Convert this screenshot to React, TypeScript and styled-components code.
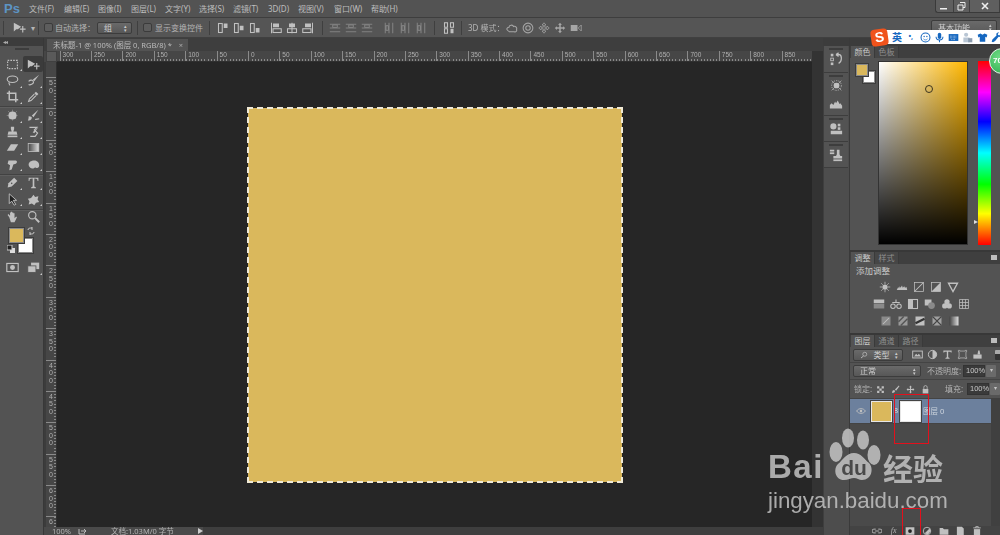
import React from "react";
import styled, { createGlobalStyle } from "styled-components";

const Global = createGlobalStyle`
  html, body { margin: 0; padding: 0; background: #535353; overflow: hidden; }
  * { box-sizing: border-box; }
`;

const CJK = `"Noto Sans", "Noto Sans CJK SC", sans-serif`;

const Page = styled.div`
  position: relative;
  width: 1000px;
  height: 535px;
  overflow: hidden;
  background: #535353;
  color: #c4c4c4;
  font: 8px/10px ${CJK};
  display: flex;
  flex-direction: column;
`;
const Chrome = styled.div`
  flex: 1;
  display: flex;
  flex-direction: column;
  min-height: 0;
  filter: blur(0.35px);
`;

/* Menu bar */
const MenuBar = styled.div`
  height: 18px;
  flex: none;
  display: flex;
  align-items: flex-start;
  border-bottom: 1px solid #3e3e3e;
  background: #535353;
`;
const Logo = styled.div`
  width: 29px;
  padding: 1px 0 0 4px;
  font: bold 13px/15px "Liberation Sans", sans-serif;
  color: #5d94c4;
`;
const Menu = styled.nav`
  display: flex;
  gap: 10px;
  padding-top: 4px;
  flex: 1;
`;
const MenuItem = styled.span<{ $w: number }>`
  width: ${(p) => p.$w}px;
  white-space: nowrap;
  color: #bdbdbd;
`;
const WinButtons = styled.div`
  display: flex;
  height: 13px;
  width: 65px;
  border: 1px solid #3a3a3a;
  border-top: 0;
  border-right: 0;
  border-radius: 0 0 0 3px;
  background: #5f5f5f;
`;
const WinButton = styled.div<{ $w: number }>`
  width: ${(p) => p.$w}px;
  display: flex;
  align-items: center;
  justify-content: center;
  border-right: 1px solid #3f3f3f;
  color: #eee;
`;

/* Options bar */
const OptionsBar = styled.div`
  height: 20px;
  flex: none;
  display: flex;
  align-items: center;
  padding-left: 3px;
  background: #555;
  border-bottom: 1px solid #404040;
`;
const Divider = styled.div<{ $l?: number; $r?: number }>`
  width: 1px;
  height: 14px;
  background: #3f3f3f;
  flex: none;
  margin: 0 ${(p) => p.$r ?? 6}px 0 ${(p) => p.$l ?? 6}px;
`;
const Check = styled.div`
  width: 9px;
  height: 9px;
  background: #5d5d5d;
  border: 1px solid #3b3b3b;
  border-radius: 2px;
  flex: none;
`;
const OptLabel = styled.span<{ $ml?: number; $w?: number }>`
  margin-left: ${(p) => p.$ml ?? 3}px;
  ${(p) => (p.$w ? `width:${p.$w}px;` : "")}
  white-space: nowrap;
  color: #b4b4b4;
  flex: none;
`;
const SelectBox = styled.div<{ $w: number; $h?: number }>`
  width: ${(p) => p.$w}px;
  height: ${(p) => p.$h ?? 12}px;
  flex: none;
  display: flex;
  align-items: center;
  justify-content: space-between;
  padding: 0 4px 0 6px;
  background: linear-gradient(#6a6a6a, #575757);
  border: 1px solid #3c3c3c;
  border-radius: 2px;
  color: #d0d0d0;
  white-space: nowrap;
`;
const WorkspaceSelect = styled(SelectBox)`
  margin-left: auto;
  margin-right: 3px;
  align-items: flex-start;
  padding-top: 2px;
`;
const Spin = styled.span`
  font-size: 5px;
  line-height: 4px;
  display: flex;
  flex-direction: column;
  color: #ccc;
`;
const OptIcons = styled.div<{ $gap: number; $op?: number; $ml?: number }>`
  display: flex;
  gap: ${(p) => p.$gap}px;
  flex: none;
  margin-left: ${(p) => p.$ml ?? 0}px;
  opacity: ${(p) => p.$op ?? 1};
`;

/* Workspace */
const Workspace = styled.div`
  flex: 1;
  min-height: 0;
  display: flex;
`;
const ToolPanel = styled.aside`
  width: 44px;
  flex: none;
  display: flex;
  flex-direction: column;
  background: #535353;
  border-right: 1px solid #383838;
`;
const CollapseBar = styled.div`
  height: 8px;
  flex: none;
  background: #3c3c3c;
  color: #aaa;
  font: 6px/8px "Liberation Sans", sans-serif;
  padding-left: 3px;
  letter-spacing: -1px;
`;
const CollapseBarRight = styled(CollapseBar)`
  text-align: center;
  padding: 0;
`;
const Grip = styled.div<{ $h?: number }>`
  height: ${(p) => p.$h ?? 10}px;
  flex: none;
  position: relative;
  &::after {
    content: "";
    position: absolute;
    left: 50%;
    top: 2px;
    width: 14px;
    height: 2px;
    margin-left: -7px;
    background: #3d3d3d;
  }
`;
const ToolGroup = styled.div<{ $rows: number }>`
  display: grid;
  grid-template-columns: 21px 20px;
  grid-auto-rows: 16.25px;
  height: ${(p) => p.$rows * 16.25 + 2.5}px;
  padding: 0 0 0 2px;
  flex: none;
  border-bottom: 1px solid #424242;
  box-shadow: 0 1px 0 #5f5f5f;
`;
const ToolCell = styled.div<{ $on?: boolean; $more?: boolean }>`
  position: relative;
  display: flex;
  align-items: center;
  justify-content: center;
  border-radius: 2px;
  background: ${(p) => (p.$on ? "#3b3b3b" : "transparent")};
  &::after {
    content: "";
    display: ${(p) => (p.$more ? "block" : "none")};
    position: absolute;
    right: 1px;
    bottom: 1px;
    border-left: 2px solid transparent;
    border-bottom: 2px solid #ccc;
  }
`;
const HandRow = styled.div<{ $h: number }>`
  display: grid;
  grid-template-columns: 21px 20px;
  grid-auto-rows: ${(p) => p.$h}px;
  padding-left: 2px;
  flex: none;
`;
const SwatchArea = styled.div`
  position: relative;
  height: 34px;
  flex: none;
  margin-top: 2px;
`;
const Swatch = styled.div<{ $c: string; $x: number; $y: number; $s: number; $z: number }>`
  position: absolute;
  left: ${(p) => p.$x}px;
  top: ${(p) => p.$y}px;
  width: ${(p) => p.$s}px;
  height: ${(p) => p.$s}px;
  background: ${(p) => p.$c};
  z-index: ${(p) => p.$z};
  border: 1px solid #8a8a8a;
  outline: 1px solid #3c3c3c;
`;
const MiniMark = styled.span<{ $x: number; $y: number }>`
  position: absolute;
  left: ${(p) => p.$x}px;
  top: ${(p) => p.$y}px;
  line-height: 0;
`;

/* Document */
const DocArea = styled.main`
  flex: 1;
  min-width: 0;
  display: flex;
  flex-direction: column;
  background: #3c3c3c;
`;
const TabStrip = styled.div`
  height: 13px;
  flex: none;
  padding-left: 3px;
  display: flex;
  align-items: flex-end;
  background: #3e3e3e;
`;
const DocTab = styled.div`
  width: 141px;
  height: 12px;
  background: #535353;
  color: #bbb;
  padding-left: 6px;
  display: flex;
  justify-content: space-between;
  font-size: 7.5px;
  line-height: 12px;
  white-space: nowrap;
`;
const TabClose = styled.span`
  padding-right: 5px;
  color: #aaa;
`;
const RulerTop = styled.div`
  height: 11px;
  flex: none;
  display: flex;
  background: #464646;
`;
const RulerCorner = styled.div`
  width: 11px;
  flex: none;
  background: #5a5a5a;
  border: 1px solid #404040;
  margin-left: 2px;
`;
const RulerTrack = styled.div`
  flex: 1;
  display: flex;
  padding-left: 2.6px;
  overflow: hidden;
  border-bottom: 1px solid #2f2f2f;
  background: repeating-linear-gradient(90deg, #8a8a8a 0 1px, transparent 1px 3.14px) 2.6px 100% / 100% 2px no-repeat;
`;
const RulerCell = styled.span`
  width: 31.4px;
  flex: none;
  height: 10px;
  border-left: 1px solid #8a8a8a;
  padding-left: 2px;
  font: 6.5px/8px "Liberation Sans", sans-serif;
  color: #b0b0b0;
`;
const DocBody = styled.div`
  flex: 1;
  min-height: 0;
  display: flex;
`;
const RulerLeft = styled.div`
  width: 11px;
  margin-left: 2px;
  flex: none;
  padding-top: 15px;
  overflow: hidden;
  display: flex;
  flex-direction: column;
  border-right: 1px solid #2f2f2f;
  background: repeating-linear-gradient(180deg, #8a8a8a 0 1px, transparent 1px 3.14px) 100% 15px / 2px 100% no-repeat, #464646;
`;
const VCell = styled.span`
  height: 31.4px;
  flex: none;
  border-top: 1px solid #8a8a8a;
  padding: 1px 0 0 3px;
  font: 7px/7.500px "Liberation Sans", sans-serif;
  color: #b0b0b0;
  white-space: pre-line;
`;
const Canvas = styled.div`
  flex: 1;
  min-width: 0;
  background: #262626;
  display: flex;
  justify-content: flex-start;
  padding: 46px 0 0 191px;
`;
const Artboard = styled.div`
  width: 374px;
  height: 374px;
  background: #dab85c;
  outline: 2px dashed #f0ead6;
  outline-offset: -1px;
  flex: none;
`;
const VScroll = styled.div`
  width: 11px;
  flex: none;
  background: #333;
`;
const StatusBar = styled.div`
  height: 8px;
  flex: none;
  display: flex;
  align-items: center;
  background: #3e3e3e;
  font-size: 7.5px;
  line-height: 8px;
  overflow: hidden;
`;
const StatusInfo = styled.div`
  width: 159px;
  height: 8px;
  display: flex;
  align-items: center;
  background: #4a4a4a;
  padding-left: 8px;
  color: #bbb;
  white-space: nowrap;
`;

/* Right strip */
const Strip = styled.aside`
  width: 27px;
  flex: none;
  display: flex;
  flex-direction: column;
  background: #535353;
  border-right: 1px solid #3a3a3a;
`;
const StripBody = styled.div`
  flex: 1;
  padding-left: 4px;
  border-left: 1px solid #3e3e3e;
  display: flex;
  flex-direction: column;
  background: #4d4d4d;
`;
const StripGroup = styled.div<{ $h: number }>`
  height: ${(p) => p.$h}px;
  flex: none;
  width: 24px;
  margin-left: -4px;
  padding-bottom: 3px;
  border-bottom: 1px solid #3d3d3d;
  display: flex;
  flex-direction: column;
  align-items: center;
  background: #535353;
`;
const StripSpace = styled.div`
  height: 5px;
  flex: none;
`;

/* Panels */
const Panels = styled.aside`
  width: 150px;
  flex: none;
  display: flex;
  flex-direction: column;
  background: #383838;
`;
const Panel = styled.section<{ $h: number }>`
  height: ${(p) => p.$h}px;
  flex: none;
  background: #535353;
  display: flex;
  flex-direction: column;
  border-bottom: 2px solid #383838;
`;
const PanelGrow = styled(Panel)`
  flex: 1;
  height: auto;
  border: 0;
`;
const Tabs = styled.div`
  height: 12px;
  flex: none;
  display: flex;
  padding-left: 1px;
  background: #3f3f3f;
  position: relative;
`;
const Tab = styled.div<{ $on?: boolean }>`
  width: 24px;
  text-align: center;
  line-height: 12px;
  background: ${(p) => (p.$on ? "#535353" : "#464646")};
  color: ${(p) => (p.$on ? "#c8c8c8" : "#8e8e8e")};
  border-right: 1px solid #3a3a3a;
`;
const PanelMenu = styled.span`
  position: absolute;
  right: 3px;
  top: 3px;
  width: 6px;
  height: 5px;
  background: #bdbdbd;
`;
const ColorBody = styled.div`
  flex: 1;
  display: flex;
  padding: 3px 0 0 0;
  position: relative;
`;
const FgBg = styled.div`
  width: 28px;
  flex: none;
  position: relative;
`;
const Field = styled.div`
  width: 90px;
  height: 184px;
  flex: none;
  position: relative;
  border: 1px solid #333;
  background: linear-gradient(to top, #000, rgba(0, 0, 0, 0)), linear-gradient(to right, #fff, #ffb700);
`;
const Picker = styled.span`
  position: absolute;
  left: 46px;
  top: 23px;
  width: 8px;
  height: 8px;
  border: 1px solid #3c3520;
  border-radius: 50%;
`;
const Hue = styled.div`
  width: 13px;
  height: 184px;
  flex: none;
  margin-left: 10px;
  position: relative;
  background: linear-gradient(#ff0000 0%, #ff00ff 17%, #0000ff 33%, #00ffff 50%, #00ff00 67%, #ffff00 83%, #ff0000 100%);
  &::before {
    content: "";
    position: absolute;
    left: -4px;
    top: 159px;
    border-left: 4px solid #ddd;
    border-top: 2.5px solid transparent;
    border-bottom: 2.5px solid transparent;
  }
`;
const AdjustTitle = styled.div`
  padding: 2px 0 0 6px;
  height: 14px;
  font-size: 8.5px;
  color: #c8c8c8;
`;
const IconRow = styled.div<{ $pl: number }>`
  display: flex;
  gap: 5px;
  height: 17px;
  align-items: center;
  padding-left: ${(p) => p.$pl}px;
`;
const LayerRow = styled.div<{ $h: number }>`
  height: ${(p) => p.$h}px;
  padding-left: 3px;
  display: flex;
  align-items: center;
  flex: none;
`;
const FilterToggle = styled.div`
  width: 6px;
  height: 10px;
  margin-left: 12px;
  background: linear-gradient(#aaa 0 40%, #333 40%);
  border-radius: 1px;
  flex: none;
`;
const Thin = styled.div`
  height: 1px;
  background: #444;
  flex: none;
`;
const LayerList = styled.div`
  flex: 1;
  display: flex;
  min-height: 0;
`;
const LayerCol = styled.div`
  flex: 1;
  background: #4a4a4a;
`;
const LayerItem = styled.div`
  height: 26px;
  display: flex;
  align-items: center;
  background: #6c809d;
  border: 1px solid #444;
  border-width: 1px 0;
  color: #d0d0d0;
`;
const LayerEye = styled.div`
  width: 21px;
  display: flex;
  justify-content: center;
`;
const Thumb = styled.div<{ $c: string }>`
  width: 21px;
  height: 21px;
  padding: 1px;
  background: ${(p) => p.$c};
  border: 1px solid #e6e6e6;
  outline: 1px solid #444;
  flex: none;
`;
const Chain = styled.div`
  width: 8px;
  text-align: center;
  color: #ddd;
  font-size: 7px;
`;
const LayerName = styled.span`
  margin-left: 2px;
  color: #cfd6df;
  font-size: 7.5px;
`;
const LScroll = styled.div`
  width: 9px;
  flex: none;
  background: #404040;
`;
const LayerFoot = styled.div`
  height: 9px;
  flex: none;
  display: flex;
  align-items: center;
  padding-left: 22px;
  gap: 6.7px;
  background: #434343;
  overflow: hidden;
`;
const FxLabel = styled.span`
  width: 10px;
  flex: none;
  text-align: center;
  font: italic 8px/9px "Liberation Serif", serif;
  color: #b4b4b4;
`;
const PctBox = styled.div`
  width: 22px;
  height: 12px;
  background: #3a3a3a;
  border: 1px solid #333;
  font: 7.5px/10px "Liberation Sans", sans-serif;
  padding-left: 2px;
  color: #c8c8c8;
  flex: none;
`;
const PctArrow = styled.div`
  width: 10px;
  height: 12px;
  margin-left: 1px;
  background: #6a6a6a;
  border-radius: 1px;
  flex: none;
  text-align: center;
  font-size: 6px;
  line-height: 11px;
`;

/* Overlays */
const Sogou = styled.div`
  position: absolute;
  left: 877px;
  top: 30px;
  width: 123px;
  height: 14px;
  background: #fff;
  display: flex;
  align-items: center;
  padding-left: 15px;
  gap: 3.3px;
  z-index: 5;
`;
const SogouLetter = styled.div`
  position: absolute;
  left: 871px;
  top: 29px;
  width: 17px;
  height: 17px;
  border-radius: 4px;
  transform: rotate(-8deg);
  background: #f0531c;
  color: #fff;
  font: bold 14px/17px "Liberation Sans", sans-serif;
  text-align: center;
  z-index: 6;
`;
const SogouLang = styled.span`
  color: #1567c0;
  font-size: 10px;
  font-weight: bold;
  line-height: 12px;
  width: 10px;
  flex: none;
`;
const SogouPunct = styled(SogouLang)`
  width: 11px;
  font-size: 7px;
  text-align: center;
`;
const Badge = styled.div`
  position: absolute;
  left: 989px;
  top: 48px;
  width: 26px;
  height: 26px;
  border-radius: 50%;
  background: radial-gradient(circle at 40% 35%, #6fdc86, #2aa948);
  border: 1px solid #e9f5ea;
  color: #fff;
  font: bold 8px/24px "Liberation Sans", sans-serif;
  padding-left: 3px;
  z-index: 5;
`;
const RedBox = styled.div<{ $x: number; $y: number; $w: number; $h: number }>`
  position: absolute;
  left: ${(p) => p.$x}px;
  top: ${(p) => p.$y}px;
  width: ${(p) => p.$w}px;
  height: ${(p) => p.$h}px;
  border: 1.5px solid #e3101c;
  z-index: 7;
`;
const Watermark = styled.div`
  position: absolute;
  left: 768px;
  top: 428px;
  width: 180px;
  height: 86px;
  color: #c9c9c9;
  opacity: 0.82;
  z-index: 4;
  filter: blur(0.3px);
`;
const WmBai = styled.span`
  position: absolute;
  left: 0;
  top: 19px;
  font: bold 33px/40px "Liberation Sans", sans-serif;
  letter-spacing: 1.5px;
`;
const WmJing = styled.span`
  position: absolute;
  left: 115px;
  top: 19px;
  font: bold 30px/40px "Noto Sans CJK SC", sans-serif;
  white-space: nowrap;
`;
const WmUrl = styled.span`
  position: absolute;
  left: 0;
  top: 60px;
  font: 22.3px/26px "Liberation Sans", sans-serif;
  white-space: nowrap;
`;
const PawSvg = styled.svg`
  position: absolute;
  left: 58px;
  top: 0;
`;

/* Icon drawing */
const Svg = styled.svg`
  display: block;
  flex: none;
`;
type IP = { n: keyof typeof G; s?: number };
const Ic = ({ n, s = 12 }: IP) => (
  <Svg width={s} height={s} viewBox="0 0 16 16" fill="#c0c0c0" stroke="none">
    {G[n]}
  </Svg>
);
const st = { fill: "none", stroke: "#c0c0c0", strokeWidth: 1.4 } as const;
const G = {
  marquee: <rect x="2" y="3" width="12" height="10" {...st} strokeDasharray="2 1.4" />,
  move: <><path d="M1 2v11l3-3 2 0 4-3z" /><path d="M12 6v8M8.5 10h7" {...st} /></>,
  lasso: <><ellipse cx="8" cy="6.5" rx="6.5" ry="4" {...st} /><path d="M4 10c-1 2 0 3 1 4" {...st} /></>,
  qsel: <><path d="M15 1 7 7l2 2z" /><path d="M2 9c3-3 6-1 6 1s-4 4-6 3" {...st} /></>,
  crop: <path d="M4 1v11h11M1 4h11v11" {...st} strokeWidth={1.8} />,
  dropper: <><path d="M11 2l3 3-2 2-3-3z" /><path d="M9 5 3 11l-1 3 3-1 6-6" {...st} /></>,
  heal: <><circle cx="8" cy="8" r="5" /><path d="M1 8h14M8 1v14M3 3l10 10M13 3 3 13" {...st} strokeWidth={0.8} strokeDasharray="1 1" /></>,
  brush: <><path d="M14 1 6 8l2 2z" /><path d="M2 9c3 0 4 1 4 2-1 3-3 3-5 3 1-1 1-3 1-5z" /><path d="M10 13c2-1 3 0 5-1" {...st} /></>,
  stamp: <><path d="M6 2h4v3l-1 3h4l1 4H2l1-4h4L6 5z" /><rect x="2" y="13" width="12" height="2" /></>,
  hist: <><path d="M3 3h9l-3 3 4 4-3 4H4" {...st} /><path d="M14 2 7 9l2 1z" /></>,
  eraser: <path d="M6 4h9l-5 8H1z" />,
  grad: <><defs><linearGradient id="gr"><stop offset="0" stopColor="#444" /><stop offset="1" stopColor="#ddd" /></linearGradient></defs><rect x="1.5" y="3" width="13" height="10" fill="url(#gr)" stroke="#c0c0c0" /></>,
  dodge: <path d="M3 3h9c2 0 2 3 0 4l-3 1-2 6-3 1 1-6-3-2z" />,
  sponge: <path d="M2 8c0-3 3-5 7-5s6 3 6 6-2 4-4 3-2 1-4 1-5-2-5-5z" />,
  pen: <><path d="M10 2l4 4-7 7-5 1 1-5z" /><circle cx="7" cy="9" r="1" fill="#535353" /></>,
  T: <path d="M2 2h12v4h-1c0-2-1-3-3-3H9v10l2 1v1H5v-1l2-1V3H6C4 3 3 4 3 6H2z" />,
  psel: <path d="M4 1v12l3-3 3 5 2-1-3-5h4z" fill="#222" stroke="#d0d0d0" />,
  shape: <path d="M8 2l2 3 4-1-1 4 2 3-4 1-2 3-3-2-4 1 1-4-2-3 4-1z" />,
  hand: <path d="M4 9 2 6l1-1 2 2V3h1v4-5h1.500v5-4H9v4-3h1.500v6l2-2 1 1-3 6H6z" />,
  zoom: <><circle cx="6.500" cy="6.500" r="4.500" {...st} /><path d="M10 10l5 5" {...st} strokeWidth={2.400} /></>,
  mask: <><rect x="1" y="3" width="14" height="10" {...st} /><circle cx="8" cy="8" r="3" /></>,
  screen: <><rect x="5" y="2" width="10" height="8" /><rect x="1" y="6" width="10" height="8" stroke="#535353" /></>,
  alignT: <><rect x="2" y="2" width="5" height="12" {...st} /><rect x="9" y="2" width="5" height="6" /></>,
  alignM: <><rect x="2" y="2" width="5" height="12" {...st} /><rect x="9" y="5" width="5" height="6" /></>,
  alignB: <><rect x="2" y="2" width="5" height="12" {...st} /><rect x="9" y="8" width="5" height="6" /></>,
  alignL: <><path d="M2 1v14" {...st} /><rect x="4" y="2" width="8" height="5" /><rect x="4" y="9" width="11" height="5" {...st} /></>,
  alignC: <><path d="M8 1v14" {...st} /><rect x="4" y="2" width="8" height="5" /><rect x="2" y="9" width="12" height="5" {...st} /></>,
  alignR: <><path d="M14 1v14" {...st} /><rect x="4" y="2" width="8" height="5" /><rect x="1" y="9" width="11" height="5" {...st} /></>,
  distH: <><path d="M1 3h14M1 8h14M1 13h14" {...st} strokeWidth={1} /><rect x="5" y="4" width="6" height="3" {...st} strokeWidth={1} /></>,
  distV: <><path d="M3 1v14M8 1v14M13 1v14" {...st} strokeWidth={1} /><rect x="4" y="5" width="3" height="6" {...st} strokeWidth={1} /></>,
  distA: <><rect x="2" y="1" width="4" height="6" {...st} /><rect x="10" y="1" width="4" height="6" {...st} /><rect x="2" y="9" width="4" height="6" {...st} /><rect x="10" y="9" width="4" height="6" /></>,
  cloud: <path d="M2 11c-2-2 0-4 2-4 0-3 5-4 6-1 3-1 5 2 4 4 1 2-1 4-3 3H5c-1 0-2-1-3-2z" {...st} />,
  target: <><circle cx="8" cy="8" r="6.500" {...st} /><circle cx="8" cy="8" r="3" {...st} /></>,
  cross4: <path d="M8 1 5.500 4H7v3H4V5.500L1 8l3 2.500V9h3v3H5.500L8 15l2.500-3H9V9h3v1.500L15 8l-3-2.500V7H9V4h1.500z" {...st} strokeWidth={1} />,
  cross5: <path d="M8 1 5.500 4H7v3H4V5.500L1 8l3 2.500V9h3v3H5.500L8 15l2.500-3H9V9h3v1.500L15 8l-3-2.500V7H9V4h1.500z" />,
  cam: <><rect x="1" y="4" width="9" height="8" /><path d="M11 8l4-4v8z" {...st} strokeWidth={1} /></>,
  hist2: <><rect x="2" y="2" width="3" height="3" /><rect x="2" y="7" width="3" height="3" {...st} strokeWidth={1} /><rect x="2" y="12" width="3" height="3" /><path d="M8 3h4c3 1 3 8-1 10M8 3l3-2M8 3l3 2" {...st} /></>,
  gear: <><circle cx="8" cy="8" r="3.500" /><circle cx="8" cy="8" r="6" {...st} strokeWidth={1} strokeDasharray="1.500 1.500" /><path d="M2 2l12 12M14 2 2 14" {...st} strokeWidth={0.8} /></>,
  hills: <path d="M1 13v-4l2-2 2 2 2-4 1 2 2-3 2 4 1-1 2 3v3z" />,
  props: <><circle cx="5" cy="5" r="3.500" /><rect x="10" y="2" width="3" height="3" /><rect x="10" y="6" width="3" height="3" /><rect x="2" y="10" width="13" height="4" /></>,
  stampI: <><rect x="1" y="2" width="5" height="2" /><rect x="1" y="5" width="5" height="2" /><path d="M9 2h3v5l1 2h2v3H5V9h3l1-2z" /><rect x="5" y="13" width="10" height="2" /></>,
  sun: <><circle cx="8" cy="8" r="3.500" /><path d="M8 1v3M8 12v3M1 8h3M12 8h3M3 3l2 2M11 11l2 2M13 3l-2 2M3 13l2-2" {...st} strokeWidth={1} /></>,
  levels: <path d="M1 12 3 8l1 2 1-3 1 2 2-3 1 3 2-2 1 2 2-1 1 4z" />,
  curves: <><rect x="2" y="2" width="12" height="12" {...st} strokeWidth={1} /><path d="M2 14 14 2" {...st} /></>,
  expo: <><rect x="2" y="2" width="12" height="12" {...st} strokeWidth={1} /><path d="M2 14 14 2v12z" /></>,
  tri: <path d="M2 3h12l-6 11z" {...st} strokeWidth={1.800} />,
  hsl: <><rect x="1" y="2" width="14" height="5" /><rect x="1" y="8" width="14" height="6" fill="#8a8a8a" /></>,
  bal: <><path d="M8 2v4M3 6h10" {...st} /><circle cx="4" cy="11" r="3" {...st} /><circle cx="12" cy="11" r="3" {...st} /></>,
  bw: <><rect x="2" y="2" width="12" height="12" {...st} /><rect x="2" y="2" width="6" height="12" /></>,
  pf: <><rect x="1" y="2" width="9" height="8" /><circle cx="10" cy="10" r="4.500" fill="#8a8a8a" /></>,
  mixer: <><circle cx="8" cy="5" r="3.500" /><circle cx="5" cy="10.500" r="3.500" /><circle cx="11" cy="10.500" r="3.500" /></>,
  lut: <path d="M2 2h12v12H2zM2 6h12M2 10h12M6 2v12M10 2v12" {...st} strokeWidth={1} />,
  inv: <><rect x="2" y="2" width="12" height="12" fill="#8a8a8a" /><path d="M4 12 12 4" {...st} /></>,
  post: <><rect x="2" y="2" width="12" height="12" fill="#9a9a9a" /><path d="M2 9 9 2M5 14 14 5" stroke="#555" strokeWidth={2} /></>,
  thre: <><rect x="2" y="2" width="12" height="12" /><path d="M2 11 14 5" stroke="#333" strokeWidth={3} /></>,
  sel: <><rect x="2" y="2" width="12" height="12" fill="#a0a0a0" /><path d="M2 2l6 6 6-6M2 14l6-6 6 6" stroke="#444" strokeWidth={1.500} fill="none" /></>,
  gm: <rect x="2" y="2" width="12" height="12" fill="url(#gr)" />,
  img: <><rect x="1" y="3" width="14" height="10" {...st} /><path d="M3 11l3-4 2 2 2-2 3 4z" /></>,
  half: <><circle cx="8" cy="8" r="6" {...st} /><path d="M8 2a6 6 0 0 1 0 12z" /></>,
  bigT: <path d="M2 2h12v3h-1l-1-1H9v8l2 1v1H5v-1l2-1V4H4L3 5H2z" />,
  frame: <path d="M2 2h2v1h8V2h2v2h-1v8h1v2h-2v-1H4v1H2v-2h1V4H2z" {...st} strokeWidth={1} />,
  smart: <><rect x="2" y="8" width="12" height="6" /><path d="M9 2h2l1 6H8z" /></>,
  chess: <path d="M2 2h4v4H2zM10 2h4v4h-4zM6 6h4v4H6zM2 10h4v4H2zM10 10h4v4h-4z" />,
  paint: <path d="M14 1 7 8l2 2 6-8zM2 14c0-3 1-5 4-5l1 2c0 2-2 3-5 3z" />,
  lock: <><rect x="3" y="7" width="10" height="8" /><path d="M5 7V4a3 3 0 0 1 6 0v3" {...st} /></>,
  eye: <><path d="M1 8c3-5 11-5 14 0-3 5-11 5-14 0z" {...st} /><circle cx="8" cy="8" r="2" /></>,
  search: <><circle cx="9.500" cy="6.500" r="4" {...st} /><path d="M7 10l-5 4" {...st} strokeWidth={1.800} /></>,
  link: <path d="M6 5H3a3 3 0 0 0 0 6h3M10 5h3a3 3 0 0 1 0 6h-3M5 8h6" {...st} />,
  mk: <><rect x="1" y="2" width="14" height="12" /><circle cx="8" cy="8" r="3" fill="#222" /></>,
  adj: <><circle cx="8" cy="8" r="6" {...st} /><path d="M4 12 12 4l2 4-4 5z" /></>,
  folder: <path d="M1 3h5l2 2h7v9H1z" />,
  newl: <path d="M3 1h8l3 3v11H3z" />,
  trash: <><rect x="3" y="5" width="10" height="10" /><path d="M2 3h12M6 3V1h4v2" {...st} /></>,
  smile: <><circle cx="8" cy="8" r="6.500" fill="none" stroke="#1567c0" strokeWidth={1.500} /><circle cx="6" cy="6.500" r="1" fill="#1567c0" /><circle cx="10" cy="6.500" r="1" fill="#1567c0" /><path d="M5 10c2 2 4 2 6 0" fill="none" stroke="#1567c0" /></>,
  mic: <><rect x="5.500" y="1" width="5" height="9" rx="2.500" fill="#1567c0" /><path d="M3 7c0 6 10 6 10 0M8 12v3" fill="none" stroke="#1567c0" strokeWidth={1.500} /></>,
  kbd: <><rect x="1" y="3" width="14" height="10" fill="#1567c0" /><path d="M3 6h10M3 8.500h10M5 11h6" stroke="#fff" strokeDasharray="1 1" /></>,
  user: <><circle cx="6" cy="4" r="3" fill="#b9c6d4" /><rect x="2" y="8" width="9" height="7" fill="#b9c6d4" /><rect x="9" y="9" width="6" height="6" fill="#8b9bad" /></>,
  shirt: <path d="M5 2 1 4l1 4 2-1v7h8V7l2 1 1-4-4-2-3 2z" fill="#1567c0" />,
  wrench: <path d="M14 3l-2 2-2-1V2l2-1C9 0 7 2 8 5L2 11l-1 3 2 1 3-2 5-6c3 1 4-2 3-4z" fill="#1567c0" />,
};

const MENU: [string, number][] = [
  ["文件(F)", 25], ["编辑(E)", 24], ["图像(I)", 23], ["图层(L)", 24], ["文字(Y)", 24], ["选择(S)", 24],
  ["滤镜(T)", 25], ["3D(D)", 20], ["视图(V)", 26], ["窗口(W)", 27], ["帮助(H)", 26],
];
const TOPRULER = [300, 250, 200, 150, 100, 50, 0, 50, 100, 150, 200, 250, 300, 350, 400, 450, 500, 550, 600, 650, 700, 750, 800, 850];
const LEFTRULER = ["5\n0", "0", "5\n0", "1\n0\n0", "1\n5\n0", "2\n0\n0", "2\n5\n0", "3\n0\n0", "3\n5\n0", "4\n0\n0", "4\n5\n0", "5\n0\n0", "5\n5\n0", "6\n0\n0", "6\n5"];

type K = keyof typeof G;
const GROUPS: [K, boolean, boolean][][] = [
  [["marquee", true, false], ["move", false, true], ["lasso", true, false], ["qsel", true, false], ["crop", true, false], ["dropper", true, false]],
  [["heal", true, false], ["brush", true, false], ["stamp", true, false], ["hist", true, false], ["eraser", true, false], ["grad", true, false], ["dodge", true, false], ["sponge", true, false]],
  [["pen", true, false], ["T", true, false], ["psel", true, false], ["shape", true, false]],
];

export default function App() {
  return (
    <Page>
      <Global />
      <Chrome>
        <MenuBar>
          <Logo>Ps</Logo>
          <Menu>
            {MENU.map(([m, w]) => (
              <MenuItem key={m} $w={w}>{m}</MenuItem>
            ))}
          </Menu>
          <WinButtons>
            <WinButton $w={18}>
              <Svg width="8" height="8" viewBox="0 0 8 8"><rect x="0" y="6" width="7" height="1.500" fill="#eee" /></Svg>
            </WinButton>
            <WinButton $w={17}>
              <Svg width="9" height="9" viewBox="0 0 9 9"><path d="M3 .5h5v5H6M1 3h5v5H1z" fill="none" stroke="#eee" /></Svg>
            </WinButton>
            <WinButton $w={30}>
              <Svg width="8" height="8" viewBox="0 0 8 8"><path d="M1 1l6 6M7 1 1 7" stroke="#eee" strokeWidth="1.600" /></Svg>
            </WinButton>
          </WinButtons>
        </MenuBar>
        <OptionsBar>
          <Divider $l={0} $r={9} />
          <Ic n="move" s={13} />
          <OptLabel $ml={5} $w={6}>▾</OptLabel>
          <Divider $l={1} $r={5} />
          <Check />
          <OptLabel $ml={2} $w={42}>自动选择：</OptLabel>
          <SelectBox $w={35}>组<Spin><span>▴</span><span>▾</span></Spin></SelectBox>
          <Divider $l={5} $r={5} />
          <Check />
          <OptLabel $w={46}>显示变换控件</OptLabel>
          <Divider $l={8} $r={7} />
          <OptIcons $gap={4}>
            <Ic n="alignT" /><Ic n="alignM" /><Ic n="alignB" />
          </OptIcons>
          <OptIcons $gap={4} $ml={9}>
            <Ic n="alignL" /><Ic n="alignC" /><Ic n="alignR" />
          </OptIcons>
          <Divider $l={8} $r={6} />
          <OptIcons $gap={4} $op={0.55}>
            <Ic n="distH" /><Ic n="distH" /><Ic n="distH" />
          </OptIcons>
          <OptIcons $gap={4} $op={0.6} $ml={10}>
            <Ic n="distV" /><Ic n="distV" /><Ic n="distV" />
          </OptIcons>
          <Divider $l={7} $r={8} />
          <OptIcons $gap={0}><Ic n="distA" /></OptIcons>
          <Divider $l={6} $r={6} />
          <OptLabel $ml={0} $w={38}>3D 模式：</OptLabel>
          <OptIcons $gap={4} $op={0.75}>
            <Ic n="cloud" /><Ic n="target" /><Ic n="cross4" /><Ic n="cross5" /><Ic n="cam" />
          </OptIcons>
          <WorkspaceSelect $w={66} $h={16}>基本功能<Spin><span>▴</span><span>▾</span></Spin></WorkspaceSelect>
        </OptionsBar>
        <Workspace>
          <ToolPanel>
            <CollapseBar>◂◂</CollapseBar>
            <Grip />
            {GROUPS.map((g, i) => (
              <ToolGroup key={i} $rows={g.length / 2}>
                {g.map(([n, more, on]) => (
                  <ToolCell key={n} $more={more} $on={on}><Ic n={n} s={13} /></ToolCell>
                ))}
              </ToolGroup>
            ))}
            <HandRow $h={14}>
              <ToolCell><Ic n="hand" s={13} /></ToolCell>
              <ToolCell><Ic n="zoom" s={13} /></ToolCell>
            </HandRow>
            <SwatchArea>
              <Swatch $c="#fff" $x={18} $y={12} $s={15} $z={1} />
              <Swatch $c="#dab85c" $x={9} $y={2} $s={15} $z={2} />
              <MiniMark $x={27} $y={1}>
                <Svg width="8" height="8" viewBox="0 0 8 8"><path d="M1 3c0-2 2-2 4-2M5 0v3M7 5c0 2-2 2-4 2M3 5v3" fill="none" stroke="#ccc" /></Svg>
              </MiniMark>
              <MiniMark $x={7} $y={19}>
                <Svg width="8" height="8" viewBox="0 0 8 8"><rect x="3" y="3" width="5" height="5" fill="#ddd" /><rect x="0" y="0" width="5" height="5" fill="#222" stroke="#ccc" /></Svg>
              </MiniMark>
            </SwatchArea>
            <HandRow $h={16}>
              <ToolCell><Ic n="mask" s={13} /></ToolCell>
              <ToolCell $more><Ic n="screen" s={13} /></ToolCell>
            </HandRow>
          </ToolPanel>
          <DocArea>
            <TabStrip>
              <DocTab>
                未标题-1 @ 100% (图层 0, RGB/8) *
                <TabClose>×</TabClose>
              </DocTab>
            </TabStrip>
            <RulerTop>
              <RulerCorner />
              <RulerTrack>
                {TOPRULER.map((v, i) => (
                  <RulerCell key={i}>{v}</RulerCell>
                ))}
              </RulerTrack>
              <VScroll />
            </RulerTop>
            <DocBody>
              <RulerLeft>
                {LEFTRULER.map((v, i) => (
                  <VCell key={i}>{v}</VCell>
                ))}
              </RulerLeft>
              <Canvas>
                <Artboard />
              </Canvas>
              <VScroll />
            </DocBody>
            <StatusBar>
              <StatusInfo>
                <OptLabel $ml={0} $w={26}>100%</OptLabel>
                <Svg width="9" height="7" viewBox="0 0 9 7"><path d="M1 1v5h6M3 3h5M6 1l2 2-2 2" fill="none" stroke="#bbb" /></Svg>
                <OptLabel $ml={24} $w={87}>文档:1.03M/0 字节</OptLabel>
                <Svg width="5" height="6" viewBox="0 0 5 6"><path d="M0 0l5 3-5 3z" fill="#ccc" /></Svg>
              </StatusInfo>
            </StatusBar>
          </DocArea>
          <Strip>
            <CollapseBarRight />
            <StripBody>
              <StripGroup $h={27}><Grip $h={6} /><Ic n="hist2" s={14} /></StripGroup>
              <StripGroup $h={43}>
                <Grip $h={6} /><Ic n="gear" s={13} /><StripSpace /><Ic n="hills" s={14} />
              </StripGroup>
              <StripGroup $h={26}><Grip $h={6} /><Ic n="props" s={14} /></StripGroup>
              <StripGroup $h={26}><Grip $h={6} /><Ic n="stampI" s={14} /></StripGroup>
            </StripBody>
          </Strip>
          <Panels>
            <CollapseBarRight>◂◂</CollapseBarRight>
            <Panel $h={206}>
              <Tabs>
                <Tab $on>颜色</Tab>
                <Tab>色板</Tab>
              </Tabs>
              <ColorBody>
                <FgBg>
                  <Swatch $c="#fff" $x={13} $y={10} $s={12} $z={1} />
                  <Swatch $c="#dab85c" $x={6} $y={3} $s={12} $z={2} />
                </FgBg>
                <Field><Picker /></Field>
                <Hue />
              </ColorBody>
            </Panel>
            <Panel $h={83}>
              <Tabs>
                <Tab $on>调整</Tab>
                <Tab>样式</Tab>
                <PanelMenu />
              </Tabs>
              <AdjustTitle>添加调整</AdjustTitle>
              <IconRow $pl={29}>
                {(["sun", "levels", "curves", "expo", "tri"] as K[]).map((n) => <Ic key={n} n={n} />)}
              </IconRow>
              <IconRow $pl={23}>
                {(["hsl", "bal", "bw", "pf", "mixer", "lut"] as K[]).map((n) => <Ic key={n} n={n} />)}
              </IconRow>
              <IconRow $pl={30}>
                {(["inv", "post", "thre", "sel", "gm"] as K[]).map((n) => <Ic key={n} n={n} />)}
              </IconRow>
            </Panel>
            <PanelGrow $h={0}>
              <Tabs>
                <Tab $on>图层</Tab>
                <Tab>通道</Tab>
                <Tab>路径</Tab>
                <PanelMenu />
              </Tabs>
              <LayerRow $h={15}>
                <SelectBox $w={50} $h={12}>
                  <Ic n="search" s={8} />类型<Spin><span>▴</span><span>▾</span></Spin>
                </SelectBox>
                <OptIcons $gap={4} $ml={9}>
                  <Ic n="img" s={11} /><Ic n="half" s={11} /><Ic n="bigT" s={11} /><Ic n="frame" s={11} /><Ic n="smart" s={11} />
                </OptIcons>
                <FilterToggle />
              </LayerRow>
              <Thin />
              <LayerRow $h={16}>
                <SelectBox $w={68} $h={12}>正常<Spin><span>▴</span><span>▾</span></Spin></SelectBox>
                <OptLabel $ml={6} $w={36}>不透明度:</OptLabel>
                <PctBox>100%</PctBox>
                <PctArrow>▾</PctArrow>
              </LayerRow>
              <Thin />
              <LayerRow $h={18}>
                <OptLabel $ml={1} $w={22}>锁定:</OptLabel>
                <OptIcons $gap={6}>
                  <Ic n="chess" s={9} /><Ic n="paint" s={9} /><Ic n="cross5" s={9} /><Ic n="lock" s={9} />
                </OptIcons>
                <OptLabel $ml={15} $w={22}>填充:</OptLabel>
                <PctBox>100%</PctBox>
                <PctArrow>▾</PctArrow>
              </LayerRow>
              <LayerList>
                <LayerCol>
                  <LayerItem>
                    <LayerEye><Ic n="eye" s={10} /></LayerEye>
                    <Thumb $c="#dab85c" />
                    <Chain>8</Chain>
                    <Thumb $c="#ffffff" />
                    <LayerName>图层 0</LayerName>
                  </LayerItem>
                </LayerCol>
                <LScroll />
              </LayerList>
              <LayerFoot>
                <Ic n="link" s={10} />
                <FxLabel>fx</FxLabel>
                <Ic n="mk" s={10} /><Ic n="adj" s={10} /><Ic n="folder" s={10} /><Ic n="newl" s={10} /><Ic n="trash" s={10} />
              </LayerFoot>
            </PanelGrow>
          </Panels>
        </Workspace>
      </Chrome>
      <Sogou>
        <SogouLang>英</SogouLang>
        <SogouPunct>•,</SogouPunct>
        <Ic n="smile" s={11} /><Ic n="mic" s={11} /><Ic n="kbd" s={11} /><Ic n="user" s={11} /><Ic n="shirt" s={11} /><Ic n="wrench" s={11} />
      </Sogou>
      <SogouLetter>S</SogouLetter>
      <Badge>70</Badge>
      <Watermark>
        <WmBai>Bai</WmBai>
        <PawSvg width="56" height="60" viewBox="0 0 56 60">
          <ellipse cx="22" cy="10" rx="6" ry="9.500" fill="#c9c9c9" />
          <ellipse cx="37" cy="12" rx="6" ry="9.500" fill="#c9c9c9" />
          <ellipse cx="10" cy="24" rx="6.500" ry="10" fill="#c9c9c9" />
          <ellipse cx="48" cy="27" rx="6.500" ry="10" fill="#c9c9c9" />
          <path d="M28 25c7 0 10 6 15 10 5 5 3 17-7 17-3 0-5-2-8-2s-6 2-10 2c-9 0-11-11-6-16 5-4 8-11 16-11z" fill="#c9c9c9" />
          <text x="28" y="47" textAnchor="middle" fontFamily="Liberation Sans" fontWeight="bold" fontSize="21" fill="#4a4a4a">du</text>
        </PawSvg>
        <WmJing>经验</WmJing>
        <WmUrl>jingyan.baidu.com</WmUrl>
      </Watermark>
      <RedBox $x={894} $y={394} $w={35} $h={50} />
      <RedBox $x={902} $y={508} $w={19} $h={30} />
    </Page>
  );
}
